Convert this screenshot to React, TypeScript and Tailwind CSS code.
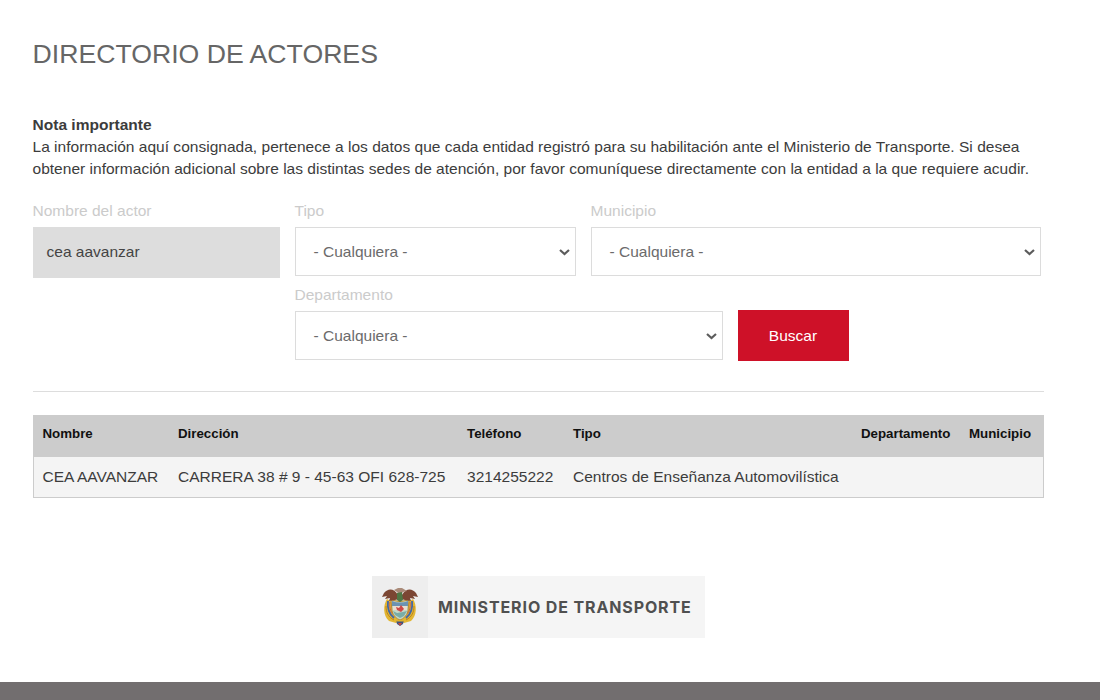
import React from "react";

function Chevron() {
  return (
    <svg className="mt-px h-[7px] w-[11px] shrink-0" viewBox="0 0 11 7" fill="none" stroke="#5c5c5c" strokeWidth="2.2">
      <path d="M1 1 5.5 5 10 1" />
    </svg>
  );
}

function Label({ children }: { children: React.ReactNode }) {
  return <div className="h-[32px] text-[15.53px] leading-[32px] text-[#cbcbcb]">{children}</div>;
}

function SelectBox() {
  return (
    <div className="flex h-[49px] items-center justify-between border border-[#dcdcdc] pl-[18px] pr-[5px] text-[15.53px] text-[#6b6b6b]">
      <span>- Cualquiera -</span>
      <Chevron />
    </div>
  );
}

function Crest() {
  return (
    <svg className="h-[40px] w-[36px]" viewBox="0 0 36 40">
      <path d="M5 12C1 18 1 29 7 34L14 36 18 34 22 36 29 34C35 29 35 18 31 12L28 14H8Z" fill="#e3b632" />
      <path d="M4 19c0 6 2 11 8 14M32 19c0 6-2 11-8 14" fill="none" stroke="#b98422" strokeWidth="1" />
      <path d="M6 14c-1 8 1 13 6 17M30 14c1 8-1 13-6 17" fill="none" stroke="#4267a8" strokeWidth="1.8" />
      <path d="M8 15c-1 6 1 11 5 14M28 15c1 6-1 11-5 14" fill="none" stroke="#c8604a" strokeWidth="1" />
      <path d="M9 13Q18 16 27 13L26 24C25 29 21 32 18 33 15 32 11 29 10 24Z" fill="#c5d8c6" stroke="#b88b30" strokeWidth="1" />
      <path d="M10 14Q18 17 26 14v5H10Z" fill="#6c93b2" />
      <path d="M11 19h14v4H11Z" fill="#e9ded0" />
      <path d="m14 20 3 1 2-3 3 4-3 3-4-2Z" fill="#cf4946" />
      <path d="m11 24 4 2 6-1 4-1-3 5-4 2-5-3Z" fill="#78ada8" />
      <path d="M16 8C12 1 6 1 2 6L0 10l5-1-2 3 5-1-1 3 6-1 4-1Z" fill="#7b4633" />
      <path d="M20 8c4-7 10-7 14-2l2 4-5-1 2 3-5-1 1 3-6-1-4-1Z" fill="#7b4633" />
      <path d="m12 3 4-2 4 0 5 3-4 1-3 3-3-3Z" fill="#a98a78" />
      <path d="m15 6 5-1 1 8-3 2-3-2Z" fill="#4e7845" />
      <path d="M14 33h8l-1 4-3 2-3-2Z" fill="#3d5280" />
      <path d="M16 36h4l-2 3Z" fill="#c84a3e" />
      <path d="M14 33h8v1.5h-8Z" fill="#dcb12f" />
    </svg>
  );
}

export default function App() {
  return (
    <div className="flex h-[700px] w-[1100px] flex-col overflow-hidden bg-white font-['Liberation_Sans',Arial,sans-serif]">
      <main className="flex-1 pl-[32.5px] pt-[36px]">
        <h1 className="h-[36px] text-[26.65px] leading-[36px] text-[#666]">DIRECTORIO DE ACTORES</h1>
        <div className="mt-[42px] whitespace-nowrap text-[15.53px] leading-[22.2px] tracking-[0.014px] text-[#3c3c3c]">
          <p className="font-bold">Nota importante</p>
          <p>La información aquí consignada, pertenece a los datos que cada entidad registró para su habilitación ante el Ministerio de Transporte. Si desea</p>
          <p>obtener información adicional sobre las distintas sedes de atención, por favor comuníquese directamente con la entidad a la que requiere acudir.</p>
        </div>
        <form className="mt-[14.4px] flex h-[196px]">
          <div className="mr-[15px] w-[247px]">
            <Label>Nombre del actor</Label>
            <div className="flex h-[51px] items-center bg-[#ddd] pb-px pl-[14px] text-[15.53px] text-[#444]">cea aavanzar</div>
          </div>
          <div>
            <div className="flex gap-[15px]">
              <div className="w-[281px]"><Label>Tipo</Label><SelectBox /></div>
              <div className="w-[450px]"><Label>Municipio</Label><SelectBox /></div>
            </div>
            <div className="mt-[3px] flex">
              <div className="mr-[15px] w-[428px]"><Label>Departamento</Label><SelectBox /></div>
              <button type="button" className="mt-[31px] h-[51px] w-[111px] bg-[#ce1128] text-[15.53px] text-white">Buscar</button>
            </div>
          </div>
        </form>
        <div className="h-px w-[1011px] bg-[#ddd]" />
        <table className="mt-[23px] w-[1010px] table-fixed border-collapse border border-[#ccc] text-left">
          <colgroup>
            <col className="w-[136px]" /><col className="w-[289px]" /><col className="w-[106px]" /><col className="w-[288px]" /><col className="w-[108px]" /><col className="w-[83px]" />
          </colgroup>
          <thead>
            <tr className="h-[41px] bg-[#ccc] text-[13.3px] leading-[18px] text-[#111]">
              {["Nombre", "Dirección", "Teléfono", "Tipo", "Departamento", "Municipio"].map((h) => (
                <th key={h} className="py-0 pb-[4px] pl-[9px] font-bold">{h}</th>
              ))}
            </tr>
          </thead>
          <tbody>
            <tr className="h-[41px] whitespace-nowrap bg-[#f4f4f4] text-[15.53px] leading-[22px] text-[#3c3c3c]">
              {["CEA AAVANZAR", "CARRERA 38 # 9 - 45-63 OFI 628-725", "3214255222", "Centros de Enseñanza Automovilística", "", ""].map((c, i) => (
                <td key={i} className="py-0 pl-[9px]">{c}</td>
              ))}
            </tr>
          </tbody>
        </table>
        <div className="ml-[339.5px] mt-[78px] flex h-[62px] w-[333px] bg-[#f5f5f5]">
          <div className="flex w-[56px] items-center justify-center bg-[#eee]"><Crest /></div>
          <div className="flex items-center whitespace-nowrap pb-px pl-[10px] font-['Inter',sans-serif] text-[16px] font-bold tracking-[0.88px] text-[#505050]">MINISTERIO DE TRANSPORTE</div>
        </div>
      </main>
      <footer className="h-[18px] shrink-0 bg-[#726e6f]" />
    </div>
  );
}
